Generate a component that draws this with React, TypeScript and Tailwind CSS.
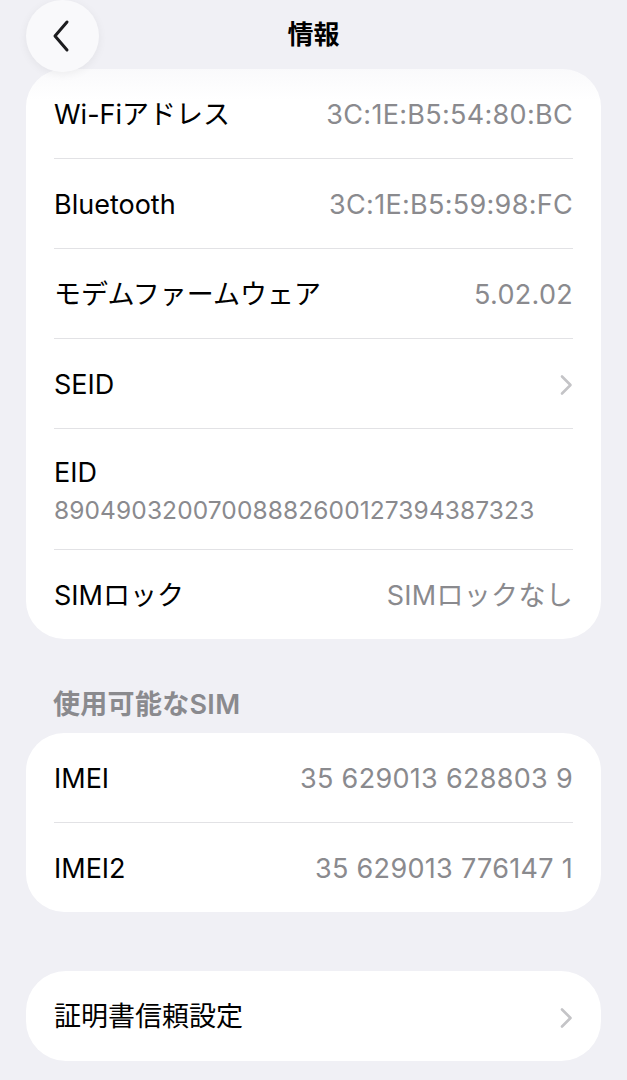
import React from "react";

const font = { fontFamily: '"Inter", "Noto Sans CJK JP", sans-serif' };

function Chevron() {
  return (
    <svg width="16" height="22" viewBox="0 0 16 22" fill="none" className="shrink-0 mr-[-1px]">
      <path d="M4 2.5 L12.5 11 L4 19.5" stroke="#c4c4c7" strokeWidth="2.6" strokeLinecap="round" strokeLinejoin="round" />
    </svg>
  );
}

function Divider() {
  return <div className="mx-[28px] h-px bg-[#e2e2e5]" />;
}

function Row({ label, value, chevron, h = "h-[89px]" }: { label: string; value?: string; chevron?: boolean; h?: string }) {
  return (
    <div className={`flex ${h} items-center justify-between px-[28px] pt-[3px]`}>
      <span className="text-[27px] text-black tracking-[0px]">{label}</span>
      {value && <span className="text-[27px] text-[#8a8a8e] tracking-[0.3px]">{value}</span>}
      {chevron && <Chevron />}
    </div>
  );
}

export default function App() {
  return (
    <div className="relative min-h-[1080px] w-[627px] bg-[#f0f0f5]" style={font}>
      <div className="relative flex h-[69px] items-center justify-center">
        <div className="absolute left-[26px] top-0 flex h-[72px] w-[73px] items-center justify-center rounded-full bg-[#f9f9fb] shadow-[0_2px_10px_rgba(0,0,0,0.06)] z-20">
          <svg width="24" height="34" viewBox="0 0 24 34" fill="none">
            <path d="M16 3 L4 17 L16 31" stroke="#1c1c1e" strokeWidth="3" strokeLinecap="round" strokeLinejoin="round" />
          </svg>
        </div>
        <span className="text-[26px] font-bold text-black z-20">情報</span>
      </div>
      <div className="pointer-events-none absolute left-0 top-0 z-10 h-[100px] w-full bg-gradient-to-b from-[#f0f0f5] via-[#f0f0f5]/60 to-transparent" />

      <div className="mx-[26px] overflow-hidden rounded-[38px] bg-white">
        <Row label="Wi-Fiアドレス" value="3C:1E:B5:54:80:BC" />
        <Divider />
        <Row label="Bluetooth" value="3C:1E:B5:59:98:FC" />
        <Divider />
        <Row label="モデムファームウェア" value="5.02.02" />
        <Divider />
        <Row label="SEID" chevron />
        <Divider />
        <div className="flex h-[120px] flex-col justify-center px-[28px] pt-[2px]">
          <span className="text-[27px] leading-[34px] text-black">EID</span>
          <span className="mt-[5px] text-[24.5px] leading-[30px] text-[#8a8a8e] tracking-[0.1px]">89049032007008882600127394387323</span>
        </div>
        <Divider />
        <Row label="SIMロック" value="SIMロックなし" />
      </div>

      <div className="mt-[50px] mb-[12px] px-[53px] text-[27px] leading-[32px] font-semibold text-[#8a8a8e] tracking-[0.3px]">使用可能なSIM</div>

      <div className="mx-[26px] overflow-hidden rounded-[38px] bg-white">
        <Row label="IMEI" value="35 629013 628803 9" />
        <Divider />
        <Row label="IMEI2" value="35 629013 776147 1" />
      </div>

      <div className="mx-[26px] mt-[59px] overflow-hidden rounded-[40px] bg-white">
        <Row label="証明書信頼設定" chevron h="h-[90px]" />
      </div>
    </div>
  );
}
